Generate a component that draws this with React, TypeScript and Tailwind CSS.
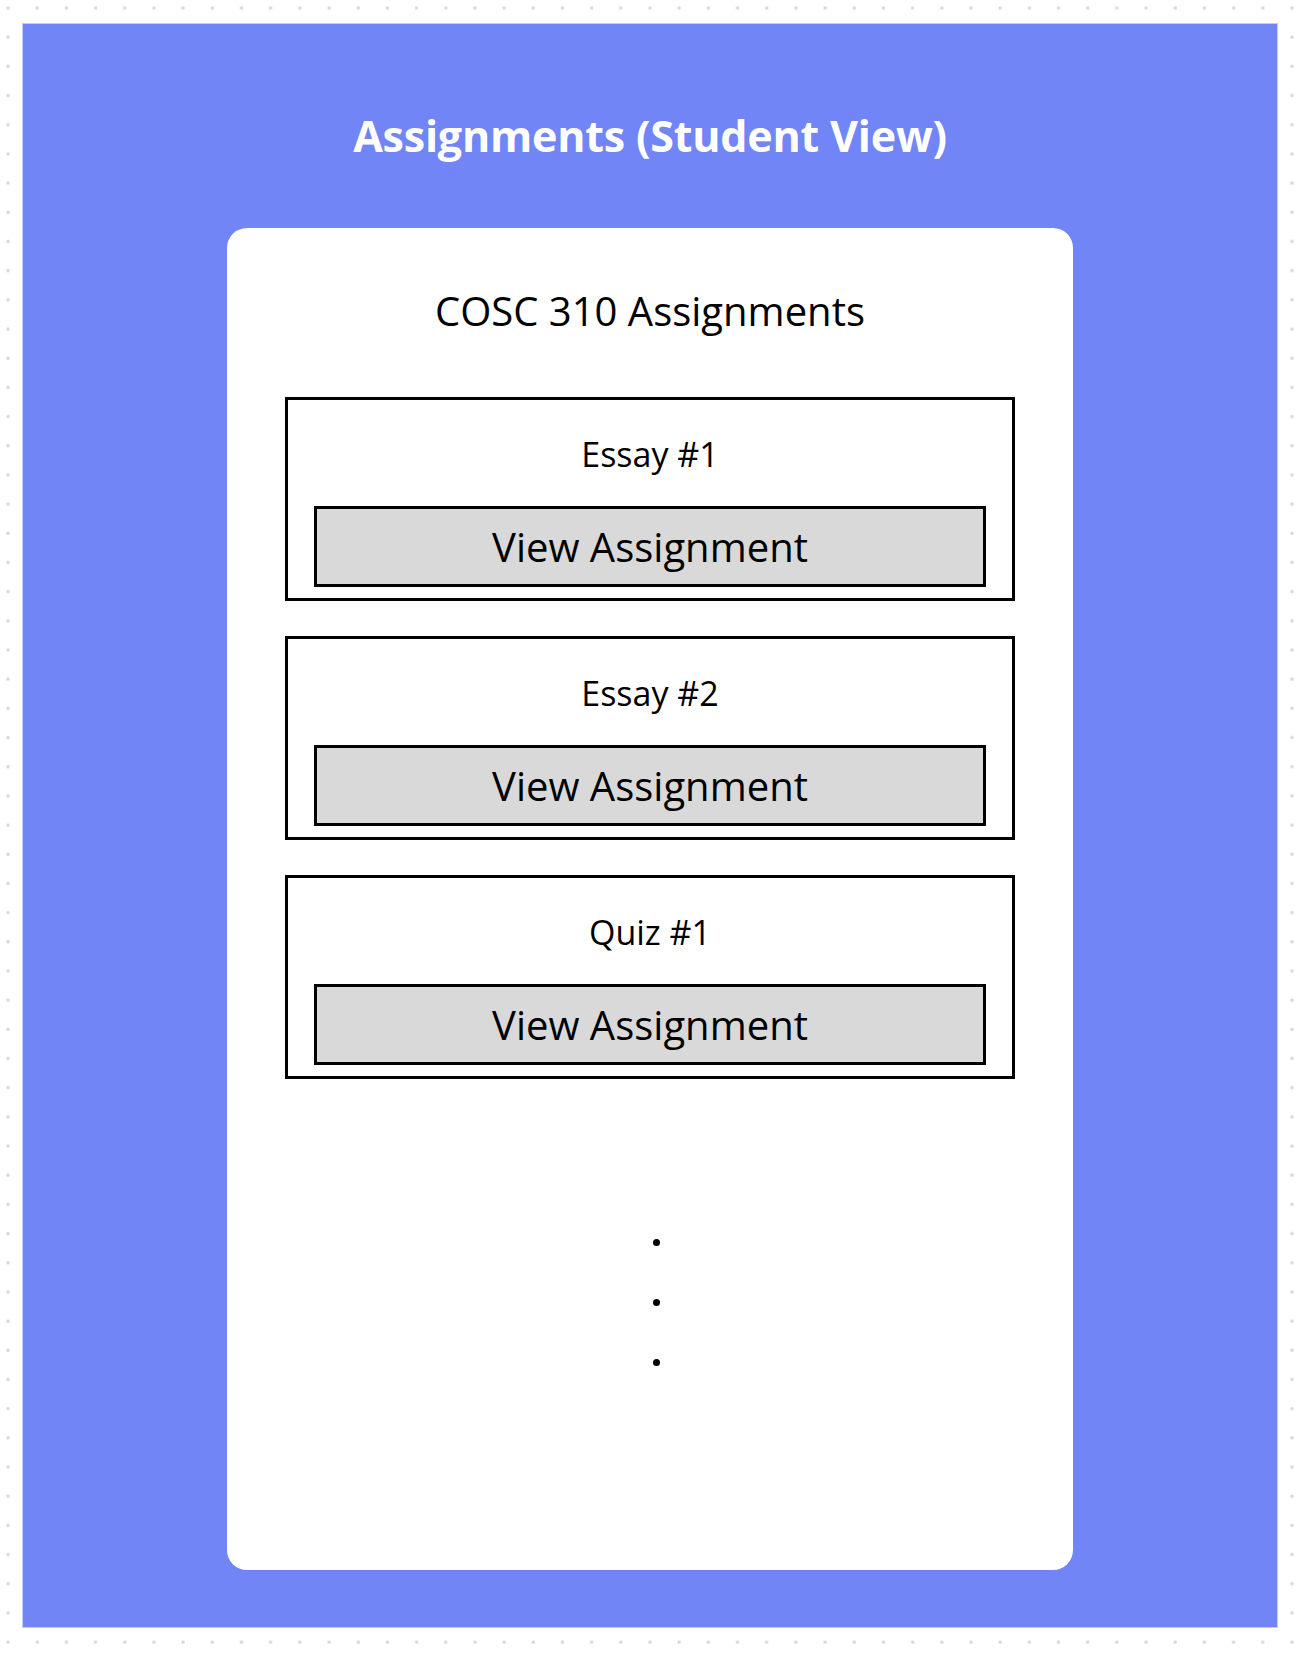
import React from "react";

const items = ["Essay #1", "Essay #2", "Quiz #1"];

export default function App() {
  return (
    <div
      className="relative w-[1304px] h-[1658px] bg-white overflow-hidden"
      style={{ fontFamily: '"Open Sans", "Noto Sans", sans-serif' }}
    >
      <svg className="absolute inset-0 pointer-events-none" width="1304" height="1658">
        <defs>
          <pattern id="dots" x="0" y="0" width="29.18" height="29.18" patternUnits="userSpaceOnUse">
            <rect x="6.5" y="6.5" width="3" height="3" fill="#d3d6de" />
          </pattern>
        </defs>
        <rect width="1304" height="1658" fill="url(#dots)" />
      </svg>
      <div className="relative pl-[22px] pt-[23px]">
        <div className="w-[1256px] h-[1605px] bg-[#7285f6] border border-[#c4cbfb] flex flex-col items-center">
          <h1 className="mt-[84px] h-[56px] leading-[56px] text-[43px] font-bold text-white tracking-[-0.2px]">
            Assignments (Student View)
          </h1>
          <div className="mt-[64px] w-[846px] h-[1342px] bg-white rounded-[20px] flex flex-col items-center">
            <div className="mt-[61px] h-[44px] leading-[44px] text-[40px] text-black">
              COSC 310 Assignments
            </div>
            <div className="mt-[64px] flex flex-col gap-[35px]">
              {items.map((t) => (
                <div
                  key={t}
                  className="w-[730px] h-[204px] border-[3px] border-black flex flex-col items-center"
                >
                  <div className="mt-[36px] h-[36px] leading-[36px] text-[34px] text-black">{t}</div>
                  <div className="mt-[34px] w-[672px] h-[81px] border-[3px] border-black bg-[#d9d9d9] flex items-center justify-center text-[40px] text-black">
                    View Assignment
                  </div>
                </div>
              ))}
            </div>
            <div className="mt-[160px] ml-[12px] flex flex-col gap-[53px]">
              <div className="w-[7px] h-[7px] rounded-full bg-black" />
              <div className="w-[7px] h-[7px] rounded-full bg-black" />
              <div className="w-[7px] h-[7px] rounded-full bg-black" />
            </div>
          </div>
        </div>
      </div>
    </div>
  );
}
